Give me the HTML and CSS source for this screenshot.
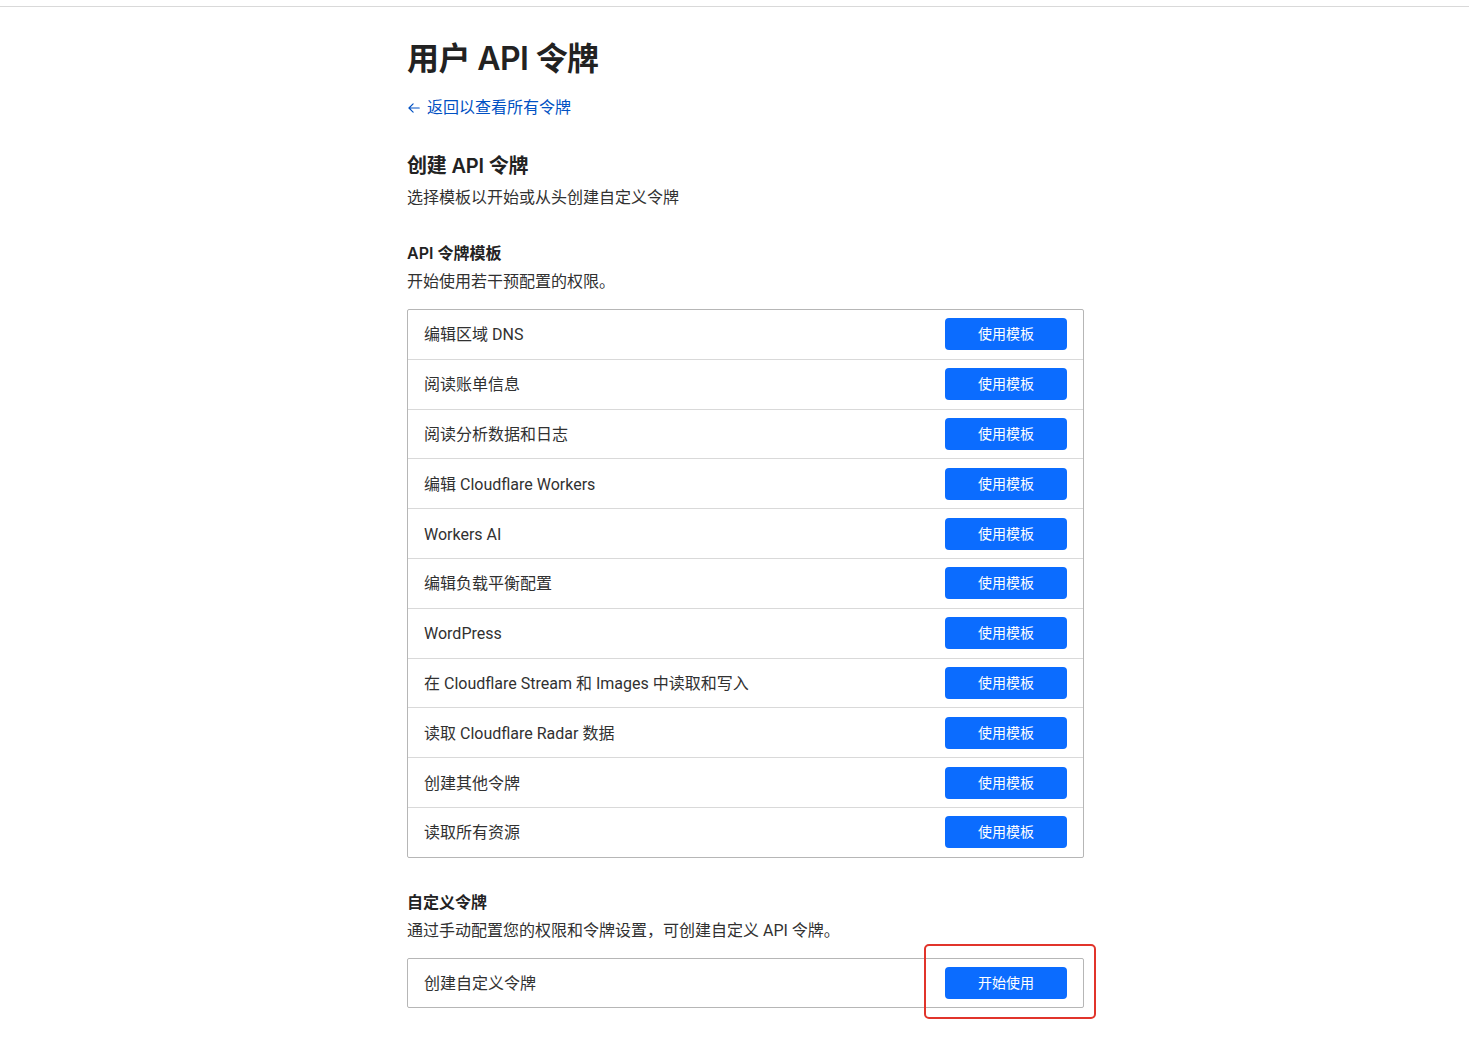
FILE: index.html
```html
<!DOCTYPE html>
<html lang="zh-CN">
<head>
<meta charset="utf-8">
<title>用户 API 令牌</title>
<link rel="stylesheet" href="styles.css">
</head>
<body>
<div class="topbar"></div>
<main class="page">
  <h1 class="title">用户 API 令牌</h1>
  <a class="back" href="#"><svg class="arrow" viewBox="0 0 16 16" width="14" height="14"><path d="M14 8H2.5M7 3.2 2.2 8 7 12.8" fill="none" stroke="currentColor" stroke-width="1.3" stroke-linecap="round" stroke-linejoin="round"/></svg>返回以查看所有令牌</a>

  <h2 class="h2">创建 API 令牌</h2>
  <p class="desc">选择模板以开始或从头创建自定义令牌</p>

  <h3 class="h3">API 令牌模板</h3>
  <p class="desc">开始使用若干预配置的权限。</p>

  <div class="list">
    <div class="row"><span class="label">编辑区域 DNS</span><button class="btn">使用模板</button></div>
    <div class="row"><span class="label">阅读账单信息</span><button class="btn">使用模板</button></div>
    <div class="row"><span class="label">阅读分析数据和日志</span><button class="btn">使用模板</button></div>
    <div class="row"><span class="label">编辑 Cloudflare Workers</span><button class="btn">使用模板</button></div>
    <div class="row"><span class="label">Workers AI</span><button class="btn">使用模板</button></div>
    <div class="row"><span class="label">编辑负载平衡配置</span><button class="btn">使用模板</button></div>
    <div class="row"><span class="label">WordPress</span><button class="btn">使用模板</button></div>
    <div class="row"><span class="label">在 Cloudflare Stream 和 Images 中读取和写入</span><button class="btn">使用模板</button></div>
    <div class="row"><span class="label">读取 Cloudflare Radar 数据</span><button class="btn">使用模板</button></div>
    <div class="row"><span class="label">创建其他令牌</span><button class="btn">使用模板</button></div>
    <div class="row"><span class="label">读取所有资源</span><button class="btn">使用模板</button></div>
  </div>

  <h3 class="h3 h3-custom">自定义令牌</h3>
  <p class="desc">通过手动配置您的权限和令牌设置，可创建自定义 API 令牌。</p>

  <div class="list list-custom">
    <div class="row row-custom"><span class="label">创建自定义令牌</span><span class="btn-wrap"><button class="btn">开始使用</button><span class="highlight"></span></span></div>
  </div>
</main>
</body>
</html>
```

FILE: styles.css
```css
* { box-sizing: border-box; }

html, body {
  margin: 0;
  padding: 0;
  background: #ffffff;
}

body {
  font-family: "Roboto", "Noto Sans CJK SC", sans-serif;
  color: #313131;
  -webkit-font-smoothing: antialiased;
}

.topbar {
  height: 7px;
  border-bottom: 1px solid #d9d9d9;
}

.page {
  width: 677px;
  margin: 0 0 0 407px;
  padding-top: 32px;
  padding-bottom: 40px;
}

.title {
  margin: 0;
  font-family: "Inter", "Noto Sans CJK SC", sans-serif;
  font-size: 32px;
  line-height: 40px;
  font-weight: 600;
  letter-spacing: -0.6px;
  color: #222222;
}

.back {
  display: inline-flex;
  align-items: center;
  gap: 6px;
  margin-top: 17px;
  font-size: 16px;
  line-height: 24px;
  color: #0051c3;
  text-decoration: none;
}

.arrow { display: block; }

.h2 {
  margin: 32px 0 0;
  font-family: "Inter", "Noto Sans CJK SC", sans-serif;
  font-size: 20px;
  line-height: 28px;
  font-weight: 600;
  letter-spacing: -0.2px;
  color: #222222;
}

.desc {
  margin: 6px 0 0;
  font-size: 16px;
  line-height: 24px;
  color: #313131;
}

.h3 {
  margin: 31px 0 0;
  font-family: "Inter", "Noto Sans CJK SC", sans-serif;
  font-size: 16px;
  line-height: 24px;
  font-weight: 600;
  color: #222222;
}

.h3-custom { margin-top: 32px; }

.h3 + .desc { margin-top: 5px; }

.list {
  margin-top: 15px;
  border: 1px solid #b6b6b6;
  border-radius: 2px;
}

.row {
  display: flex;
  align-items: center;
  justify-content: space-between;
  height: 49.8px;
  padding: 0 16px;
  border-top: 1px solid #d9d9d9;
}

.row:first-child { border-top: 0; height: 48.8px; }

.row-custom { height: 48px !important; }

.label {
  font-size: 16px;
  line-height: 24px;
  padding-top: 2px;
  color: #313131;
}

.btn {
  width: 122px;
  height: 32px;
  border: 0;
  border-radius: 4px;
  background: #0b6cff;
  color: #ffffff;
  font-family: "Roboto", "Noto Sans CJK SC", sans-serif;
  font-size: 14px;
  line-height: 20px;
  padding: 0;
  cursor: pointer;
}

.btn-wrap {
  position: relative;
  display: block;
}

.btn-wrap .btn { display: block; }

.highlight {
  position: absolute;
  left: -21px;
  right: -29px;
  top: -23px;
  bottom: -20px;
  border: 2px solid #e1342b;
  border-radius: 5px;
  pointer-events: none;
}
```
